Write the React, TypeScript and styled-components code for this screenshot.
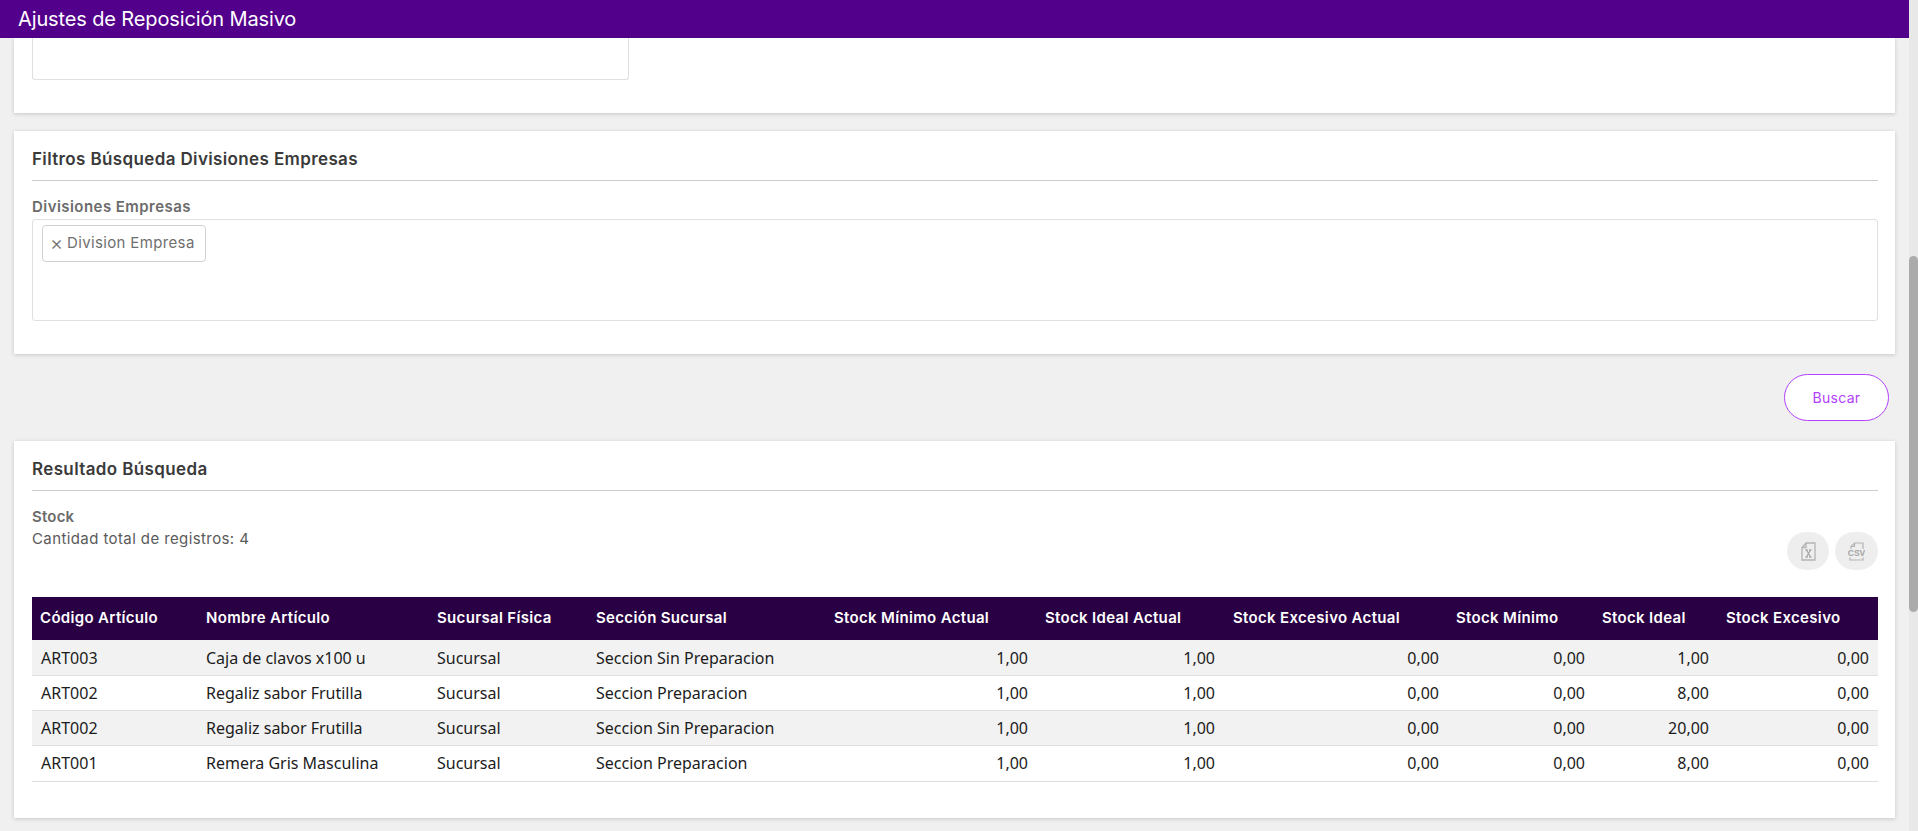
import React from "react";
import styled, { createGlobalStyle } from "styled-components";

const Global = createGlobalStyle`
  html, body { margin: 0; padding: 0; height: 100%; overflow: hidden; background: #f0f0f0; }
  #root { height: 100%; }
  * { box-sizing: border-box; }
`;

const Shell = styled.div`
  display: flex;
  width: 1918px;
  height: 831px;
  overflow: hidden;
`;
const Main = styled.div`
  width: 1909px;
  display: flex;
  flex-direction: column;
  background: #f0f0f0;
  font-family: "Inter", "Liberation Sans", sans-serif;
`;
const Header = styled.header`
  height: 38px;
  flex: none;
  background: #52008c;
  color: #fff;
  font-size: 20px;
  line-height: 38px;
  padding-left: 18px;
  letter-spacing: -0.13px;
`;
const Content = styled.main`
  flex: 1;
  display: flex;
  flex-direction: column;
  padding: 0 14px 0 14px;
`;
const Card = styled.section<{ $height: number; $gap?: number }>`
  height: ${(p) => p.$height}px;
  margin-top: ${(p) => p.$gap ?? 0}px;
  width: 1881px;
  flex: none;
  background: #fff;
  box-shadow: 0 1px 4px rgba(0, 0, 0, 0.18);
  padding: 0 17px 0 18px;
`;
const ClippedInput = styled.div`
  width: 597px;
  height: 42px;
  background: #fff;
  border: 1px solid #e0e0e0;
  border-top: none;
  border-radius: 0 0 3px 3px;
`;
const CardTitle = styled.h2`
  margin: 0;
  padding-top: 17px;
  height: 50px;
  font-size: 17px;
  line-height: 22px;
  font-weight: 600;
  color: #3a3a3a;
  letter-spacing: 0.37px;
  border-bottom: 1px solid #ccc;
`;
const FieldLabel = styled.div`
  margin-top: 16px;
  font-size: 15px;
  line-height: 19px;
  font-weight: 600;
  color: #6b6b6b;
  letter-spacing: 0.45px;
`;
const MultiSelect = styled.div`
  margin-top: 3px;
  height: 102px;
  border: 1px solid #e0e0e0;
  border-radius: 3px;
  padding: 5px 9px;
`;
const Chip = styled.span`
  display: inline-flex;
  align-items: center;
  gap: 4px;
  height: 37px;
  width: 164px;
  padding: 0 0 2px 7px;
  border: 1px solid #d0d0d0;
  border-radius: 4px;
  color: #6f6f6f;
  font-size: 15px;
  letter-spacing: 0.35px;
  white-space: nowrap;
`;
const ChipRemove = styled.span`
  font-size: 20px;
  font-weight: 300;
  line-height: 1;
  letter-spacing: 0;
`;
const Actions = styled.div`
  height: 87px;
  flex: none;
  display: flex;
  justify-content: flex-end;
  align-items: flex-start;
  padding: 20px 6px 0 0;
`;
const SearchButton = styled.button`
  width: 105px;
  height: 47px;
  background: #fff;
  border: 1px solid #b340ff;
  border-radius: 24px;
  color: #b340ff;
  font: 400 14px "Inter", "Liberation Sans", sans-serif;
  letter-spacing: 0.3px;
  padding: 0;
`;
const ResultMeta = styled.div`
  display: flex;
  justify-content: space-between;
  height: 106px;
`;
const MetaText = styled.div`
  padding-top: 16px;
`;
const MetaTitle = styled.div`
  font-size: 15px;
  line-height: 19px;
  font-weight: 600;
  color: #6b6b6b;
  letter-spacing: 0.2px;
`;
const MetaCount = styled.div`
  margin-top: 3px;
  font-size: 15px;
  line-height: 19px;
  color: #5a5a5a;
  letter-spacing: 0.4px;
`;
const ExportGroup = styled.div`
  display: flex;
  gap: 6px;
  padding-top: 41px;
  align-items: flex-start;
`;
const ExportButton = styled.button<{ $width: number }>`
  width: ${(p) => p.$width}px;
  height: 38px;
  border: none;
  padding: 0;
  border-radius: 19px;
  background: #eeeeee;
  display: flex;
  align-items: center;
  justify-content: center;
`;
const Table = styled.table`
  width: 1846px;
  table-layout: fixed;
  border-collapse: collapse;
`;
const HeadCell = styled.th`
  height: 43px;
  background: #2a0044;
  color: #fff;
  text-align: left;
  padding: 0 0 2px 8px;
  font-size: 15px;
  font-weight: 600;
  letter-spacing: 0.33px;
  white-space: nowrap;
`;
const Row = styled.tr<{ $alt: boolean }>`
  background: ${(p) => (p.$alt ? "#f2f2f2" : "#fff")};
  border-bottom: 1px solid #dedede;
  &:first-child td {
    padding-top: 1px;
  }
  &:last-child td {
    height: 36px;
  }
`;
const Cell = styled.td<{ $num?: boolean }>`
  height: 35px;
  padding: 0 9px 0 8px;
  font-family: "Noto Sans", "Open Sans", sans-serif;
  font-size: 16px;
  color: #1c1c1c;
  white-space: nowrap;
  text-align: ${(p) => (p.$num ? "right" : "left")};
  &:first-child {
    padding-left: 9px;
  }
  &:nth-child(6) {
    padding-right: 10px;
  }
`;
const ScrollTrack = styled.div`
  width: 9px;
  flex: none;
  background: #e8e8e8;
  padding-top: 256px;
`;
const ScrollThumb = styled.div`
  height: 356px;
  background: #ababab;
  border-radius: 5px;
`;

const widths = [166, 231, 159, 238, 211, 188, 223, 146, 124, 160];
const heads = [
  "Código Artículo",
  "Nombre Artículo",
  "Sucursal Física",
  "Sección Sucursal",
  "Stock Mínimo Actual",
  "Stock Ideal Actual",
  "Stock Excesivo Actual",
  "Stock Mínimo",
  "Stock Ideal",
  "Stock Excesivo",
];
const rows = [
  ["ART003", "Caja de clavos x100 u", "Sucursal", "Seccion Sin Preparacion", "1,00", "1,00", "0,00", "0,00", "1,00", "0,00"],
  ["ART002", "Regaliz sabor Frutilla", "Sucursal", "Seccion Preparacion", "1,00", "1,00", "0,00", "0,00", "8,00", "0,00"],
  ["ART002", "Regaliz sabor Frutilla", "Sucursal", "Seccion Sin Preparacion", "1,00", "1,00", "0,00", "0,00", "20,00", "0,00"],
  ["ART001", "Remera Gris Masculina", "Sucursal", "Seccion Preparacion", "1,00", "1,00", "0,00", "0,00", "8,00", "0,00"],
];

const XlsIcon = () => (
  <svg width="15" height="19" viewBox="0 0 15 19" fill="none">
    <path d="M5 1H14V18H1V5.5L5 1V5.5H1" stroke="#b4b4b4" strokeWidth="1.3" />
    <path d="M4.5 8H6.8M8.2 8H10.5M4.5 15H6.8M8.2 15H10.5M5.5 8L9.5 15M9.5 8L5.5 15" stroke="#a8a8a8" strokeWidth="1.3" />
  </svg>
);
const CsvIcon = () => (
  <svg width="17" height="19" viewBox="0 0 17 19" fill="none">
    <path d="M3 7V4.5L6.5 1H15V7M6.5 1V4.5H3M2 15.5V18H15V15.5" stroke="#b4b4b4" strokeWidth="1.2" />
    <text x="8.5" y="13.5" textAnchor="middle" fontSize="8.5" fontWeight="700" fontFamily="Liberation Sans, sans-serif" fill="#a4a4a4">CSV</text>
  </svg>
);

export default function App() {
  return (
    <Shell>
      <Global />
      <Main>
        <Header>Ajustes de Reposición Masivo</Header>
        <Content>
          <Card $height={75}>
            <ClippedInput />
          </Card>
          <Card $height={223} $gap={18}>
            <CardTitle>Filtros Búsqueda Divisiones Empresas</CardTitle>
            <FieldLabel>Divisiones Empresas</FieldLabel>
            <MultiSelect>
              <Chip><ChipRemove>×</ChipRemove>Division Empresa</Chip>
            </MultiSelect>
          </Card>
          <Actions>
            <SearchButton>Buscar</SearchButton>
          </Actions>
          <Card $height={377}>
            <CardTitle>Resultado Búsqueda</CardTitle>
            <ResultMeta>
              <MetaText>
                <MetaTitle>Stock</MetaTitle>
                <MetaCount>Cantidad total de registros: 4</MetaCount>
              </MetaText>
              <ExportGroup>
                <ExportButton $width={42} aria-label="Excel"><XlsIcon /></ExportButton>
                <ExportButton $width={43} aria-label="CSV"><CsvIcon /></ExportButton>
              </ExportGroup>
            </ResultMeta>
            <Table>
              <colgroup>
                {widths.map((w, i) => (
                  <col key={i} style={{ width: w }} />
                ))}
              </colgroup>
              <thead>
                <tr>
                  {heads.map((h) => (
                    <HeadCell key={h}>{h}</HeadCell>
                  ))}
                </tr>
              </thead>
              <tbody>
                {rows.map((r, i) => (
                  <Row key={i} $alt={i % 2 === 0}>
                    {r.map((c, j) => (
                      <Cell key={j} $num={j > 3}>{c}</Cell>
                    ))}
                  </Row>
                ))}
              </tbody>
            </Table>
          </Card>
        </Content>
      </Main>
      <ScrollTrack>
        <ScrollThumb />
      </ScrollTrack>
    </Shell>
  );
}
